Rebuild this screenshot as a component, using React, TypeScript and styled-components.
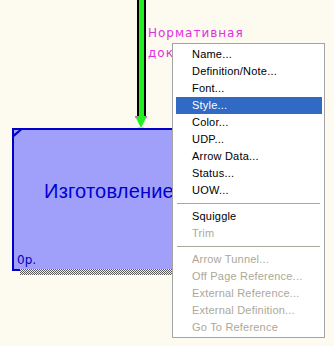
import React from "react";
import styled, { createGlobalStyle } from "styled-components";

const GlobalStyle = createGlobalStyle`
  html, body {
    margin: 0;
    padding: 0;
    background: #fdfaef;
  }
`;

const Canvas = styled.div`
  position: relative;
  width: 334px;
  height: 346px;
  overflow: hidden;
  background: #fdfaef;
  font-family: "Liberation Sans", Arial, sans-serif;
`;

const ArrowLayer = styled.svg`
  position: absolute;
  left: 132px;
  top: 0;
`;

const ArrowLabel = styled.div`
  position: absolute;
  left: 148px;
  top: 23px;
  display: flex;
  flex-direction: column;
  color: #e030e0;
  font-family: "DejaVu Sans", Verdana, sans-serif;
  font-size: 12px;
  line-height: 20px;
  letter-spacing: 1px;
`;

const LabelLine = styled.span<{ $clip?: number }>`
  white-space: nowrap;
  overflow: hidden;
  width: ${(p) => (p.$clip ? `${p.$clip}px` : "auto")};
`;

const ActivityBox = styled.div`
  position: absolute;
  left: 12px;
  top: 128px;
  width: 194px;
  height: 143px;
  box-sizing: border-box;
  border: 2px solid #0000c8;
  background: #a0a0fb;
  display: flex;
  align-items: center;
  justify-content: center;
  padding-bottom: 16px;

  &::after {
    content: "";
    position: absolute;
    left: 6px;
    right: -8px;
    top: 100%;
    height: 6px;
    background-image: repeating-conic-gradient(#5a5a5a 0 25%, #f0f0f0 0 50%);
    background-size: 2px 2px;
  }
`;

const ActivityName = styled.span`
  color: #0000d0;
  font-size: 20px;
  letter-spacing: 0.2px;
`;

const CornerMark = styled.svg`
  position: absolute;
  left: 0;
  top: 0;
`;

const NodeRef = styled.span`
  position: absolute;
  left: 3px;
  bottom: 2px;
  color: #0000c0;
  font-family: "DejaVu Sans", Verdana, sans-serif;
  font-size: 12px;
`;

const Menu = styled.ul`
  position: absolute;
  left: 172px;
  top: 43px;
  width: 153px;
  margin: 0;
  padding: 2px 2px 1px 3px;
  box-sizing: border-box;
  list-style: none;
  display: flex;
  flex-direction: column;
  background: #ffffff;
  border: 1px solid #a4a4a4;
  font-family: "Liberation Sans", Arial, sans-serif;
  font-size: 11px;
`;

const MenuItem = styled.li<{ $active?: boolean; $disabled?: boolean }>`
  height: 17px;
  line-height: 17px;
  padding-left: 16px;
  white-space: nowrap;
  letter-spacing: 0.2px;
  background: ${(p) => (p.$active ? "#316ac5" : "transparent")};
  color: ${(p) => (p.$active ? "#ffffff" : p.$disabled ? "#aca899" : "#000000")};
`;

const MenuSeparator = styled.li`
  height: 9px;
  display: flex;
  align-items: center;
  padding: 0 2px 0 1px;

  &::before {
    content: "";
    flex: 1;
    height: 1px;
    background: #aca899;
  }
`;

type Entry = { label: string; active?: boolean; disabled?: boolean } | "sep";

const entries: Entry[] = [
  { label: "Name..." },
  { label: "Definition/Note..." },
  { label: "Font..." },
  { label: "Style...", active: true },
  { label: "Color..." },
  { label: "UDP..." },
  { label: "Arrow Data..." },
  { label: "Status..." },
  { label: "UOW..." },
  "sep",
  { label: "Squiggle" },
  { label: "Trim", disabled: true },
  "sep",
  { label: "Arrow Tunnel...", disabled: true },
  { label: "Off Page Reference...", disabled: true },
  { label: "External Reference...", disabled: true },
  { label: "External Definition...", disabled: true },
  { label: "Go To Reference", disabled: true },
];

const Arrow = () => (
  <ArrowLayer width="18" height="134" viewBox="0 0 18 134">
    <rect x="5" y="0" width="9" height="117" fill="#000" />
    <rect x="7" y="0" width="5" height="118" fill="#22ee22" />
    <polygon points="3,116 15,116 9,128" fill="#22ee22" />
    <polygon points="3,116 5,116 4,119" fill="#e040e0" />
    <polygon points="13,116 15,116 14,119" fill="#e040e0" />
    <ellipse cx="9" cy="130" rx="3.5" ry="2.5" fill="#7a7020" />
    <rect x="6" y="127" width="6" height="2" fill="#e8e850" />
  </ArrowLayer>
);

export default function App() {
  return (
    <>
      <GlobalStyle />
      <Canvas>
        <Arrow />
        <ArrowLabel>
          <LabelLine>Нормативная</LabelLine>
          <LabelLine $clip={24}>документация</LabelLine>
        </ArrowLabel>
        <ActivityBox>
          <CornerMark width="12" height="12" viewBox="0 0 12 12">
            <polygon points="0,0 8,0 0,7" fill="#0000c8" />
            <polygon points="0,0 5,0 0,4" fill="#a0a0fb" />
          </CornerMark>
          <ActivityName>Изготовление</ActivityName>
          <NodeRef>0р.</NodeRef>
        </ActivityBox>
        <Menu>
          {entries.map((e, i) =>
            e === "sep" ? (
              <MenuSeparator key={i} />
            ) : (
              <MenuItem key={i} $active={e.active} $disabled={e.disabled}>
                {e.label}
              </MenuItem>
            )
          )}
        </Menu>
      </Canvas>
    </>
  );
}
